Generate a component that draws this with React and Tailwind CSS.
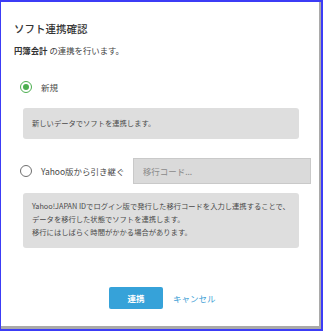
import { useState } from 'react';

const font = { fontFamily: '"Noto Sans CJK JP", "Noto Sans", sans-serif' };

const Radio = ({ checked }) => (
  <span
    className={`flex items-center justify-center w-[12px] h-[12px] rounded-full border-[1.5px] ${
      checked ? 'border-[#4caf50]' : 'border-[#6f6f6f]'
    }`}
  >
    {checked && <span className="w-[6px] h-[6px] rounded-full bg-[#4caf50]" />}
  </span>
);

const App = () => {
  const [mode, setMode] = useState('new');

  return (
    <div className="w-[323px] h-[331px] bg-[#3c3cf6] pt-[2px] pl-[1px] pr-[2px] pb-[2px]" style={font}>
      <div className="w-full h-full bg-white border-r-2 border-b-[3px] border-[#a9a9a9] flex flex-col text-[#4a4a4a]">
        <h1 className="ml-[13px] mt-[20px] text-[10.5px] leading-[14px] font-medium text-[#333]">
          ソフト連携確認
        </h1>
        <p className="ml-[13px] mt-[8px] text-[8.4px] leading-[12px] text-[#444]">
          <span className="font-bold text-[#333]">円簿会計</span> の連携を行います。
        </p>

        <button
          onClick={() => setMode('new')}
          className="ml-[19px] mt-[24px] flex items-center gap-[9px] h-[14px]"
        >
          <Radio checked={mode === 'new'} />
          <span className="text-[8.5px] text-[#4a4a4a]">新規</span>
        </button>

        <div className="ml-[22px] mt-[14px] w-[276px] h-[31px] rounded-[3px] bg-[#dedede] flex items-center pl-[9px]">
          <span className="text-[7.3px] text-[#4a4a4a]">新しいデータでソフトを連携します。</span>
        </div>

        <div className="ml-[19px] mt-[19px] flex items-center h-[26px]">
          <button onClick={() => setMode('yahoo')} className="flex items-center gap-[9px]">
            <Radio checked={mode === 'yahoo'} />
            <span className="text-[8.5px] text-[#4a4a4a]">Yahoo版から引き継ぐ</span>
          </button>
          <input
            placeholder="移行コード..."
            className="ml-[8px] w-[178px] h-[26px] bg-[#dadada] border border-[#c9c9c9] pl-[9px] text-[8.5px] placeholder:text-[#8a8a8a] outline-none"
          />
        </div>

        <div className="ml-[22px] mt-[9px] w-[276px] rounded-[3px] bg-[#dedede] pl-[9px] pt-[7px] pb-[9px] text-[7.3px] leading-[13px] text-[#4a4a4a]">
          <p>Yahoo!JAPAN IDでログイン版で発行した移行コードを入力し連携することで、</p>
          <p>データを移行した状態でソフトを連携します。</p>
          <p>移行にはしばらく時間がかかる場合があります。</p>
        </div>

        <div className="mt-[39px] ml-[108px] flex items-center gap-[10px]">
          <button className="w-[54px] h-[22px] rounded-[2px] bg-[#36a2d9] text-white text-[8.5px] font-bold">
            連携
          </button>
          <button className="text-[8.5px] text-[#3f9fd6]">キャンセル</button>
        </div>
      </div>
    </div>
  );
};

export default App;
